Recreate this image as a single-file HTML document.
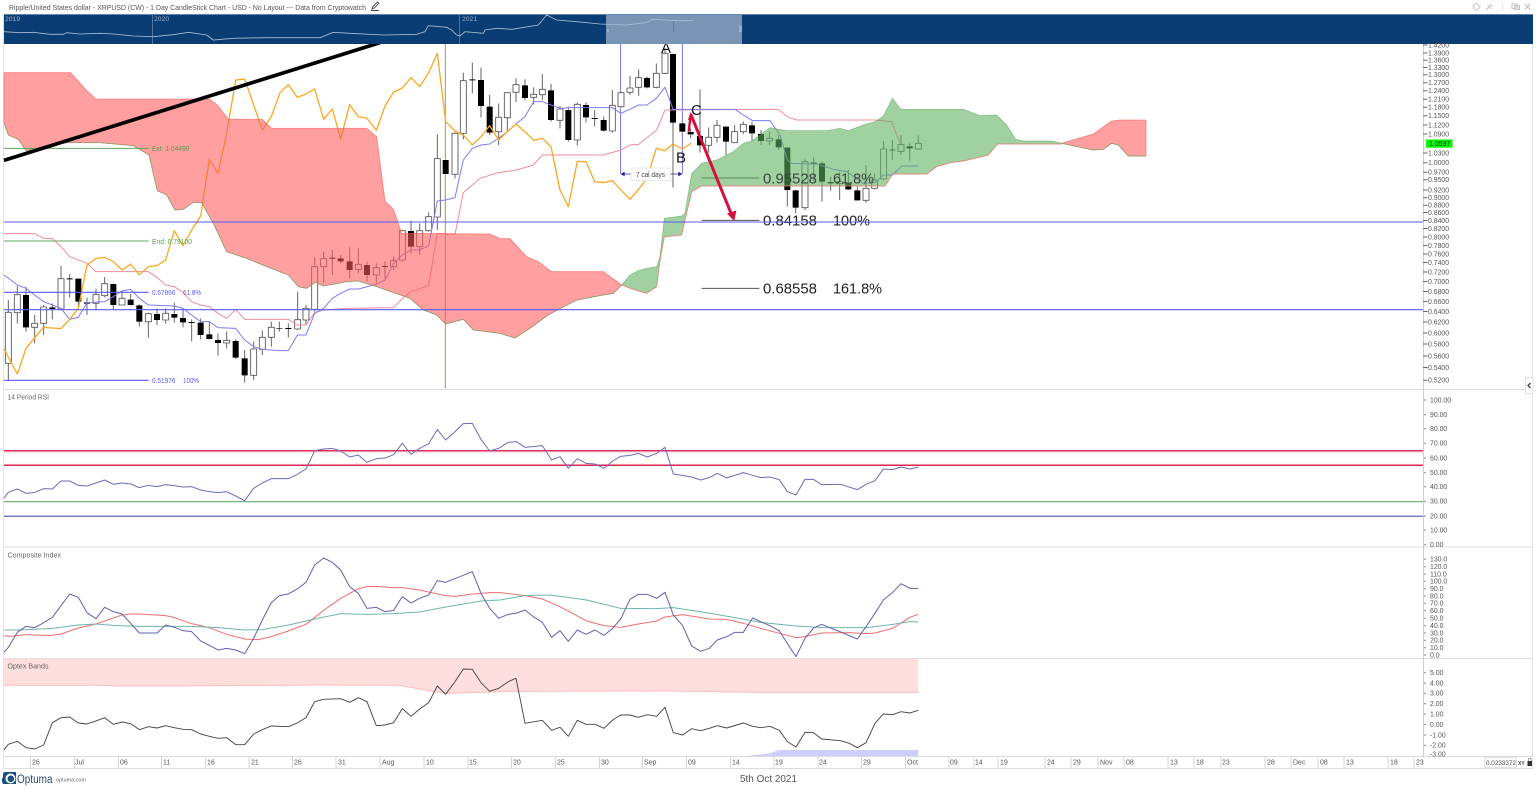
<!DOCTYPE html>
<html><head><meta charset="utf-8"><title>XRPUSD</title>
<style>
html,body{margin:0;padding:0;background:#fff;width:1536px;height:788px;overflow:hidden}
svg{display:block;position:absolute;left:0;top:0;filter:blur(.35px)}
text{font-family:"Liberation Sans",sans-serif}
.ax text{font-size:6.9px;fill:#555}
.dt text{font-size:7px;fill:#555}
.lb{font-size:7.2px;fill:#666}
.big{font-size:15px;fill:#222}
</style></head><body>
<svg width="1536" height="788" viewBox="0 0 1536 788">
<!-- frame -->
<path d="M3.5 14V769M1532.5 44V769" stroke="#e2e2e2" fill="none"/>
<path d="M4 389.5H1533M4 547H1533M4 658.5H1533M4 756.5H1533M4 768.5H1533" stroke="#dcdcdc" fill="none"/>
<path d="M1423.5 44V757" stroke="#cfcfcf" fill="none"/>

<g transform="scale(.33333)" fill="none" stroke-linejoin="round">
<!-- vertical marker -->
<path d="M1336 130V1165" stroke="#a09a50" stroke-width="3"/>
<!-- big fib labels lines -->
<path d="M2105 534H2278M2105 661H2278M2105 865H2278" stroke="#555" stroke-width="3"/>
<!-- measure -->
<path d="M1862 130V522M2047 130V522" stroke="#5d5de0" stroke-width="2.5"/>
<path d="M1866 522H2044" stroke="#22229a" stroke-width="2.5"/>
<path d="M1862 522l12-7v14zM2047 522l-12-7v14z" fill="#22229a"/>

<!-- candle wicks -->
<path stroke="#666" stroke-width="3" d="M25 900V1140M52 858V970M78 860V995M104 945V1030M131 915V1005M157 910V958M183 798V930M209 822V893M235 836V920M261 893V945M288 866V928M314 831V892M340 850V928M366 873V915M392 882V916M418 914V980M445 938V1013M471 925V975M497 925V970M523 908V968M549 927V982M575 958V1024M602 955V1018M628 963V1018M654 1000V1067M680 995V1045M707 1018V1077M734 1050V1148M761 1025V1140M787 992V1065M814 965V1040M838 965V995M865 970V1012M893 875V990M918 915V975M944 772V935M971 755V848M997 750V825M1022 765V790M1049 742V835M1075 745V820M1101 785V845M1129 790V850M1155 785V835M1181 770V810M1207 690V785M1233 662V760M1259 670V765M1286 637V695M1312 403V690M1337 480V522M1365 397V535M1390 218V418M1417 188V280M1443 203V352M1469 285V405M1496 310V435M1522 278V395M1548 235V306M1575 238V302M1601 262V313M1627 222V300M1653 252V365M1680 318V385M1705 320V425M1732 308V437M1758 307V368M1784 330V380M1811 350V395M1837 270V398M1863 275V320M1890 228V285M1916 208V288M1941 230V265M1969 190V265M1995 145V222M2019 160V563M2047 368V395M2072 385V415M2100 268V458M2126 382V458M2151 360V428M2178 378V465M2204 375V428M2230 365V402M2256 365V422M2283 390V435M2309 395V435M2336 405V450M2362 442V620M2387 570V640M2415 478V630M2441 472V545M2466 485V605M2492 530V572M2519 515V600M2545 510V570M2572 560V602M2598 495V608M2624 520V568M2651 423V540M2677 420V480M2703 405V465M2729 430V482M2755 406V450"/>
<!-- white bodies -->
<path fill="#fff" stroke="#555" stroke-width="2.6" d="M16 937h18v153h-18zM43 884h18v54h-18zM95 970h18v12h-18zM122 921h18v49h-18zM174 836h18v91h-18zM279 883h18v27h-18zM305 851h18v36h-18zM357 895h18v20h-18zM436 941h18v24h-18zM488 940h18v20h-18zM671 1021h18v8h-18zM752 1047h18v79h-18zM778 1012h18v36h-18zM805 982h18v30h-18zM884 959h18v28h-18zM909 925h18v35h-18zM935 800h18v128h-18zM962 776h18v24h-18zM1066 793h18v15h-18zM1120 803h18v22h-18zM1172 782h18v18h-18zM1198 692h18v88h-18zM1250 692h18v48h-18zM1277 650h18v42h-18zM1303 476h18v175h-18zM1356 400h18v123h-18zM1381 242h18v158h-18zM1487 352h18v43h-18zM1513 278h18v75h-18zM1539 254h18v23h-18zM1592 283h18v9h-18zM1618 268h18v16h-18zM1671 327h18v34h-18zM1723 313h18v107h-18zM1828 316h18v77h-18zM1854 278h18v42h-18zM1881 264h18v13h-18zM1907 233h18v29h-18zM1960 220h18v42h-18zM1986 160h18v60h-18zM2117 412h18v24h-18zM2142 376h18v36h-18zM2195 395h18v33h-18zM2221 373h18v22h-18zM2300 415h18v8h-18zM2406 485h18v138h-18zM2510 545h18v6h-18zM2589 565h18v36h-18zM2615 540h18v25h-18zM2642 447h18v90h-18zM2694 434h18v20h-18zM2746 430h18v17h-18z"/>
<!-- black bodies -->
<path stroke="#000" stroke-width="18" d="M78 885V982M157 922V927M209 835V838M235 836V905M261 907V911M340 852V915M392 899V915M418 916V965M471 942V960M523 942V953M549 954V967M575 966V969M602 968V1005M628 1003V1017M654 1020V1029M707 1023V1073M734 1075V1126M838 984V986M865 984V987M997 773V776M1022 775V784M1049 784V810M1101 795V825M1155 798V801M1233 693V740M1337 480V522M1417 238V241M1443 240V318M1469 320V398M1575 256V294M1653 271V360M1705 330V420M1758 315V352M1784 354V357M1811 360V392M1941 234V262M2019 162V368M2047 370V395M2072 396V403M2100 408V436M2178 380V425M2256 376V400M2283 402V423M2336 418V442M2362 443V570M2387 571V623M2441 488V491M2466 490V545M2492 546V550M2545 548V568M2572 571V601M2677 449V451M2729 439V445"/>

<!-- Kijun pink -->
<polyline stroke="#f08c9c" stroke-width="3" points="12,701 104,701 131,715 157,716 183,740 209,770 261,790 288,815 445,815 471,832 497,855 523,860 549,877 575,905 602,915 628,920 654,940 680,955 707,928 734,958 865,958 892,975 918,975 944,938 971,930 1040,925 1180,923 1208,895 1233,875 1286,857 1312,700 1365,703 1390,578 1440,535 1495,518 1550,510 1600,495 1627,465 1810,465 1863,450 1890,435 1916,433 1970,390 1995,330 2335,328 2365,352 2390,360 2625,360 2675,365 2700,430"/>
<!-- Tenkan blue -->
<polyline stroke="#7c7cf0" stroke-width="3" points="12,825 52,855 78,865 104,885 131,905 157,915 183,925 209,958 235,952 261,908 314,905 340,890 366,873 392,868 418,895 445,915 523,918 549,925 575,945 602,965 628,965 654,983 707,985 734,1020 761,1040 787,1048 838,1052 865,1052 892,1005 918,1005 944,940 971,925 997,895 1022,880 1049,867 1075,867 1129,853 1155,840 1181,790 1207,765 1233,750 1259,750 1286,737 1312,603 1337,600 1365,593 1390,480 1417,445 1443,435 1469,432 1496,415 1522,395 1548,372 1575,350 1601,305 1627,305 1653,315 1680,325 1705,323 1837,323 1863,340 1890,328 1916,315 1941,315 1969,295 1995,262 2019,328 2205,328 2230,345 2258,362 2310,362 2340,405 2362,480 2375,490 2450,492 2500,508 2540,515 2590,550 2625,548 2650,525 2678,525 2705,498 2755,498"/>
<!-- Chikou orange -->
<polyline stroke="#f9a61e" stroke-width="3.8" points="12,1047 52,1122 78,1045 130,982 183,986 209,958 235,925 261,795 288,775 314,772 340,785 366,810 392,792 418,824 445,800 471,797 497,780 523,692 549,737 575,690 602,648 628,478 654,520 680,400 707,240 734,237 787,390 814,350 840,278 865,254 892,292 918,282 944,267 971,358 997,327 1022,417 1049,314 1075,350 1101,355 1129,391 1155,318 1181,276 1207,264 1233,233 1259,260 1286,218 1312,160 1337,365 1365,393 1390,405 1417,435 1443,410 1469,377 1496,420 1522,395 1548,372 1575,395 1601,421 1627,415 1653,440 1680,570 1705,620 1732,484 1758,485 1784,545 1811,548 1837,542 1863,570 1890,598 1916,568 1941,535 1969,445 1995,452 2019,432 2047,447 2073,430"/>

<!-- Red cloud -->
<polygon fill="#ff5a5a" fill-opacity=".58" stroke="#f05050" stroke-opacity=".6" stroke-width="2.5" points="12,218 212,218 260,272 288,297 628,297 655,318 685,358 787,358 815,385 1100,385 1130,410 1155,603 1180,628 1205,700 1470,702 1500,716 1530,716 1580,770 1615,785 1655,815 1810,815 1865,855 1840,880 1810,885 1730,900 1644,945 1590,985 1545,1014 1500,1000 1420,990 1390,958 1337,972 1310,945 1270,930 1230,895 1130,860 1075,843 1040,845 970,858 945,847 920,865 895,860 865,825 800,800 740,775 680,755 640,670 605,608 580,607 550,628 525,630 500,585 472,572 447,465 400,437 300,428 200,428 130,440 78,452 55,418 25,405 12,368"/>
<polyline stroke="#7aa36c" stroke-width="2" points="12,368 25,405 55,418 78,452 130,440 200,428 300,428 400,437 447,465 472,572 500,585 525,630 550,628 580,607 605,608 640,670 680,755 740,775 800,800 865,825 895,860 920,865 945,847 970,858 1040,845 1075,843 1130,860 1230,895 1270,930 1310,945 1337,972 1390,958 1420,990 1500,1000 1545,1014 1590,985 1644,945 1730,900 1810,885 1840,880 1865,855"/>
<!-- Green cloud -->
<polygon fill="#5fb05f" fill-opacity=".59" stroke="#3d9a3d" stroke-opacity=".55" stroke-width="2" points="1865,855 1890,825 1915,812 1940,805 1970,800 1980,770 1993,655 2045,648 2055,640 2075,520 2105,490 2150,480 2200,455 2230,430 2255,423 2310,383 2360,392 2480,392 2520,385 2545,392 2590,375 2625,365 2650,348 2677,295 2703,328 2890,328 2940,347 2990,345 3020,375 3047,418 3070,423 3155,423 3185,430 3185,432 2992,432 2965,465 2890,483 2850,488 2810,500 2780,522 2678,522 2655,558 2105,558 2075,575 2055,660 2045,705 1993,710 1980,780 1970,860 1940,880 1900,868"/>
<polyline stroke="#f08080" stroke-width="2.5" points="1865,855 1900,868 1940,880 1970,860 1980,780 1993,710 2045,705 2055,660 2075,575 2105,558 2655,558 2678,522 2780,522 2810,500 2850,488 2890,483 2965,465 2992,432 3185,432"/>
<!-- Red cloud end -->
<polygon fill="#ff5a5a" fill-opacity=".58" stroke="#f05050" stroke-opacity=".6" stroke-width="2.5" points="3185,430 3280,402 3335,363 3360,360 3438,360 3438,468 3385,468 3355,435 3335,430 3310,448 3280,450"/>
<polyline stroke="#7aa36c" stroke-width="2" points="3185,430 3280,450 3310,448 3335,430 3355,435 3385,468 3438,468"/>

<!-- big labels -->
<g transform="scale(3)" stroke="none">
<text class="big" x="763" y="183.5" style="fill:#3a4440" textLength="54" lengthAdjust="spacingAndGlyphs">0.95528</text><text class="big" x="833" y="183.5" style="fill:#3a4440" textLength="41" lengthAdjust="spacingAndGlyphs">61.8%</text>
<text class="big" x="763" y="225.5" textLength="54" lengthAdjust="spacingAndGlyphs">0.84158</text><text class="big" x="833" y="225.5" textLength="37" lengthAdjust="spacingAndGlyphs">100%</text>
<text class="big" x="763" y="293.5" textLength="54" lengthAdjust="spacingAndGlyphs">0.68558</text><text class="big" x="833" y="293.5" textLength="49" lengthAdjust="spacingAndGlyphs">161.8%</text>
</g>

<!-- horizontal -->
<path d="M12 666H4269M12 929H4269" stroke="#5a5af0" stroke-width="3.2"/>
<path d="M12 445H446M12 723H446" stroke="#5da85d" stroke-width="3"/>
<path d="M12 877H446M12 1141H446" stroke="#5a5af0" stroke-width="3.2"/>
<!-- trend line -->
<path d="M12 481L1140 128" stroke="#000" stroke-width="11"/>
<!-- red arrows -->
<path d="M2066 395L2072 345" stroke="#d5103f" stroke-width="7"/>
<path d="M2072 342L2198 652" stroke="#d5103f" stroke-width="9"/>
<path d="M2072 336l-8 24 17-2zM2203 663l-22-22 28-10z" fill="#d5103f"/>

<!-- RSI lines -->
<g transform="translate(0,1155)">
<path d="M12 200.5H4269M12 238H4269" stroke="#f5b4c0" stroke-width="3"/>
<path d="M12 197H4269M12 241H4269" stroke="#d8073f" stroke-width="3.4"/>
<path d="M12 350H4269" stroke="#64ac64" stroke-width="3.2"/>
<path d="M12 391.5H4269" stroke="#d6d6f4" stroke-width="2"/>
<path d="M12 394H4269" stroke="#6666b8" stroke-width="3.2"/>
<polyline stroke="#6c6cb8" stroke-width="3" points="12,340 25,322 52,312 78,325 104,322 131,311 157,312 183,288 209,288 235,301 261,303 288,294 314,285 340,298 366,294 392,297 418,308 445,301 471,305 497,299 523,302 549,306 575,305 602,315 628,320 654,323 680,320 707,333 734,347 761,310 787,294 814,281 865,281 892,268 918,252 944,197 971,192 997,190 1022,198 1049,216 1075,210 1101,232 1129,221 1155,219 1181,209 1207,175 1233,208 1259,190 1286,176 1312,134 1337,165 1365,140 1390,116 1417,115 1443,163 1469,198 1496,190 1525,172 1550,170 1575,187 1627,182 1655,225 1680,215 1705,250 1732,221 1758,235 1785,237 1812,250 1838,228 1862,214 1890,211 1915,205 1942,216 1970,205 1995,187 2020,267 2050,272 2075,276 2102,285 2128,278 2152,265 2180,279 2230,263 2258,271 2282,278 2310,276 2338,284 2362,320 2388,330 2415,283 2440,283 2465,299 2522,298 2572,314 2598,298 2625,287 2650,252 2678,254 2703,246 2730,252 2755,246"/>

<!-- Composite -->
<polyline stroke="#ee6e6e" stroke-width="3" points="12,752 30,754 78,749 130,751 157,751 183,747 235,729 288,717 314,708 366,690 392,687 418,687 497,692 523,698 575,716 628,728 680,748 734,762 775,764 814,755 865,738 918,718 971,676 1022,640 1075,611 1101,605 1129,604 1181,608 1207,608 1259,615 1312,627 1337,632 1365,634 1417,627 1470,623 1500,623 1575,632 1627,642 1680,665 1760,708 1812,722 1862,727 1915,717 1970,708 1995,696 2048,689 2128,702 2180,703 2230,715 2282,730 2338,745 2388,758 2415,755 2465,744 2548,743 2598,746 2625,744 2678,730 2730,697 2755,688"/>
<polyline stroke="#6fb5ac" stroke-width="3" points="12,735 60,735 157,730 235,720 288,717 340,721 418,724 497,724 575,724 654,728 734,735 787,734 865,720 944,702 1022,686 1100,688 1180,686 1259,681 1337,666 1443,648 1500,645 1575,632 1650,630 1760,645 1862,670 1970,671 2020,668 2100,680 2205,698 2282,712 2388,723 2465,728 2600,728 2678,718 2730,710 2755,711"/>
<polyline stroke="#6060b0" stroke-width="3" points="12,802 25,787 52,742 78,724 104,728 131,713 157,697 183,662 209,627 235,637 261,683 288,701 314,667 340,680 366,687 392,715 418,744 471,744 497,720 523,727 549,737 575,740 602,768 654,795 680,790 707,795 734,806 761,760 787,705 814,653 838,632 865,627 892,612 918,592 944,540 971,519 997,532 1022,555 1049,605 1075,625 1101,670 1129,667 1155,680 1181,676 1207,635 1233,654 1259,640 1286,630 1312,587 1337,592 1417,560 1443,625 1469,670 1496,700 1525,688 1550,684 1575,675 1600,695 1627,712 1655,757 1680,737 1705,769 1732,735 1758,748 1785,735 1812,751 1838,730 1862,702 1890,643 1915,628 1942,628 1970,640 1995,622 2020,690 2048,722 2075,783 2102,799 2128,790 2152,765 2180,755 2205,742 2230,742 2258,699 2282,710 2310,722 2338,738 2388,815 2415,760 2440,730 2465,718 2522,741 2572,762 2598,725 2625,685 2650,645 2678,622 2703,596 2730,610 2755,610"/>

<!-- Optex -->
<polygon fill="#ffdede" points="12,821 2755,821 2755,922 2280,922 2000,918 1536,919 1340,925 1290,918 1200,901 950,900 850,901 500,903 350,903 300,901 12,901"/>
<polyline stroke="#ffbcbc" stroke-width="3" points="12,901 300,901 350,903 500,903 850,901 950,900 1200,901 1290,918 1340,925 1536,919 2000,918 2280,922 2755,922"/>
<polygon fill="#cfcfff" points="2238,1113 2280,1108 2310,1105 2335,1095 2755,1095 2755,1113"/>
<polyline stroke="#444" stroke-width="2.8" points="12,1094 25,1078 52,1069 78,1088 104,1092 131,1080 157,1013 183,998 209,996 235,1014 261,1017 288,1008 314,998 340,1018 366,1011 392,1016 418,1034 445,1025 471,1029 497,1022 523,1028 549,1033 575,1034 602,1047 628,1054 654,1060 680,1058 707,1079 734,1079 761,1047 787,1034 814,1023 865,1025 892,1014 918,998 944,950 971,943 1022,941 1049,952 1075,938 1101,950 1129,1022 1155,1020 1181,1013 1207,971 1233,994 1259,972 1286,953 1312,903 1337,928 1365,890 1390,852 1417,853 1443,893 1469,919 1496,910 1525,890 1548,880 1575,1015 1627,1006 1655,1036 1680,1027 1705,1054 1732,1006 1758,1018 1785,1018 1812,1030 1838,1005 1862,990 1890,990 1915,997 1942,989 1970,994 1995,967 2020,1043 2048,1050 2075,1031 2102,1037 2128,1030 2152,1022 2180,1029 2230,1014 2258,1024 2282,1028 2310,1024 2338,1036 2362,1070 2388,1086 2415,1042 2440,1043 2465,1062 2522,1067 2548,1075 2572,1088 2598,1073 2625,1015 2650,987 2678,989 2703,980 2730,984 2755,976"/>
</g>
</g>

<!-- 7 cal days -->
<rect x="631" y="168" width="39" height="12.5" fill="#fff" stroke="#e8e8e8"/>
<text x="636" y="177" font-size="7" fill="#444" textLength="29" lengthAdjust="spacingAndGlyphs">7 cal days</text>
<!-- ABC -->
<text x="661" y="53" font-size="15" fill="#111">A</text>
<text x="676" y="162.5" font-size="15" fill="#111">B</text>
<text x="691" y="115" font-size="15" fill="#111">C</text>
<!-- fib labels -->
<text x="152" y="151" font-size="7" fill="#4f9e4f" textLength="37.5" lengthAdjust="spacingAndGlyphs">Ext: 1.04490</text>
<text x="152" y="244" font-size="7" fill="#4f9e4f" textLength="40" lengthAdjust="spacingAndGlyphs">End: 0.79100</text>
<text x="152" y="295" font-size="7" fill="#5a5af0" textLength="23.500" lengthAdjust="spacingAndGlyphs">0.67866</text>
<text x="183" y="295" font-size="7" fill="#5a5af0" textLength="18" lengthAdjust="spacingAndGlyphs">61.8%</text>
<text x="152" y="383" font-size="7" fill="#5a5af0" textLength="23.500" lengthAdjust="spacingAndGlyphs">0.51976</text>
<text x="183" y="383" font-size="7" fill="#5a5af0" textLength="16" lengthAdjust="spacingAndGlyphs">100%</text>
<!-- pane labels -->
<text class="lb" x="7.5" y="399.5" textLength="41.5" lengthAdjust="spacingAndGlyphs">14 Period RSI</text>
<text class="lb" x="7.5" y="557.5" textLength="53.5" lengthAdjust="spacingAndGlyphs">Composite Index</text>
<text class="lb" x="7.5" y="668.5" textLength="41" lengthAdjust="spacingAndGlyphs">Optex Bands</text>

<!-- overview -->
<rect x="4" y="14" width="1529" height="30" fill="#0a3d73"/>
<rect x="4" y="14" width="1529" height="1" fill="#5f86ac"/>
<rect x="606" y="15" width="136" height="29" fill="#7896b4"/>
<path d="M152.5 15V44M459.5 15V44" stroke="#4e76a0" fill="none"/>
<path d="M607 29h2v3h-2zM739 26h3v6h-3z" fill="#9ab0c6"/>
<path d="M673.5 20V32" stroke="#5f7f9f" fill="none"/>
<g transform="scale(.33333)"><polyline fill="none" stroke="#a9bfd4" stroke-width="2.6" points="12,95 60,98 100,97 150,103 190,103 200,98 240,102 300,100 340,102 400,108 460,110 520,104 565,97 620,105 640,120 700,115 800,113 900,113 960,113 1000,97 1050,100 1150,105 1250,103 1275,95 1285,77 1340,82 1355,90 1370,105 1380,108 1395,95 1450,100 1455,90 1490,85 1536,88 1615,75 1640,45 1670,60 1730,65 1800,72 1880,75 1935,68 1960,58 2030,62 2080,62"/></g>
<g font-size="6.8" fill="#9db4cc"><text x="5" y="21">2019</text><text x="154" y="21">2020</text><text x="462" y="21">2021</text></g>

<!-- title -->
<text x="9" y="10" font-size="7.2" fill="#555" textLength="357" lengthAdjust="spacingAndGlyphs">Ripple/United States dollar - XRPUSD (CW) - 1 Day CandleStick Chart - USD - No Layout --- Data from Cryptowatch</text>
<path d="M372 9l1-2.5 4.5-4.5 1.4 1.4-4.5 4.5zM371 10.5h8" fill="none" stroke="#444" stroke-width=".9"/>
<!-- top right icons -->
<g fill="none" stroke="#c8c8c8">
<path d="M1476.5 3l3.7 3.7-3.7 3.7-3.7-3.7z"/>
<path d="M1486 10l3-3m-1.5-2l4 4m-2-5l3 3" stroke-width="1.2"/>
<path d="M1502.5 4v1M1502.5 6.500v1M1502.5 9v1" />
<rect x="1512" y="4" width="5.500" height="4.500" stroke-width="1.200"/><rect x="1514.500" y="5.500" width="5" height="4" fill="#ddd"/>
<path d="M1525 4l5 5.500M1530 4l-5 5.500" stroke-width="1.400"/>
</g>

<!-- price axis -->
<path fill="none" stroke="#666" d="M1423 45h4.500M1423 53h4.500M1423 60.300h4.500M1423 67.500h4.500M1423 74.700h4.500M1423 82.700h4.500M1423 90.700h4.500M1423 99.300h4.500M1423 107.300h4.500M1423 115.700h4.500M1423 125h4.500M1423 134h4.500M1423 153h4.500M1423 162.700h4.500M1423 172.300h4.500M1423 179.700h4.500M1423 190h4.500M1423 197.700h4.500M1423 205.300h4.500M1423 212.500h4.500M1423 220.500h4.500M1423 228.500h4.500M1423 237h4.500M1423 245.500h4.500M1423 254h4.500M1423 262.500h4.500M1423 272h4.500M1423 281.500h4.500M1423 291.500h4.500M1423 301.500h4.500M1423 311.500h4.500M1423 322h4.500M1423 333h4.500M1423 344h4.500M1423 356h4.500M1423 367.500h4.500M1423 380.300h4.500"/>
<g class="ax">
<text x="1428" y="47.400">1.4200</text><text x="1428" y="55.400">1.3900</text><text x="1428" y="62.700">1.3600</text><text x="1428" y="69.900">1.3300</text><text x="1428" y="77.100">1.3000</text><text x="1428" y="85.100">1.2700</text><text x="1428" y="93.100">1.2400</text><text x="1428" y="101.700">1.2100</text><text x="1428" y="109.700">1.1800</text><text x="1428" y="118.100">1.1500</text><text x="1428" y="127.400">1.1200</text><text x="1428" y="136.400">1.0900</text><text x="1428" y="155.400">1.0300</text><text x="1428" y="165.100">1.0000</text><text x="1428" y="174.700">0.9700</text><text x="1428" y="182.100">0.9500</text><text x="1428" y="192.400">0.9200</text><text x="1428" y="200.100">0.9000</text><text x="1428" y="207.700">0.8800</text><text x="1428" y="214.900">0.8600</text><text x="1428" y="222.900">0.8400</text><text x="1428" y="230.900">0.8200</text><text x="1428" y="239.400">0.8000</text><text x="1428" y="247.900">0.7800</text><text x="1428" y="256.400">0.7600</text><text x="1428" y="264.900">0.7400</text><text x="1428" y="274.400">0.7200</text><text x="1428" y="283.900">0.7000</text><text x="1428" y="293.900">0.6800</text><text x="1428" y="303.900">0.6600</text><text x="1428" y="313.900">0.6400</text><text x="1428" y="324.400">0.6200</text><text x="1428" y="335.400">0.6000</text><text x="1428" y="346.400">0.5800</text><text x="1428" y="358.400">0.5600</text><text x="1428" y="369.900">0.5400</text><text x="1428" y="382.700">0.5200</text>
<!-- RSI -->
<text x="1430" y="402.400">100.00</text><text x="1430" y="417.100">90.00</text><text x="1430" y="431.100">80.00</text><text x="1430" y="445.700">70.00</text><text x="1430" y="460.400">60.00</text><text x="1430" y="475.100">50.00</text><text x="1430" y="489.100">40.00</text><text x="1430" y="503.700">30.00</text><text x="1430" y="518.400">20.00</text><text x="1430" y="532.400">10.00</text><text x="1430" y="547">0.00</text>
<!-- Composite -->
<text x="1430" y="561.700">130.0</text><text x="1430" y="569.100">120.0</text><text x="1430" y="576.400">110.0</text><text x="1430" y="583.700">100.0</text><text x="1430" y="591.100">90.0</text><text x="1430" y="598.400">80.0</text><text x="1430" y="605.700">70.0</text><text x="1430" y="613.100">60.0</text><text x="1430" y="620.700">50.0</text><text x="1430" y="628.100">40.0</text><text x="1430" y="635.400">30.0</text><text x="1430" y="642.700">20.0</text><text x="1430" y="650.100">10.0</text><text x="1430" y="657.400">0.0</text>
<!-- Optex -->
<text x="1430" y="675.100">5.00</text><text x="1430" y="685.400">4.00</text><text x="1430" y="695.700">3.00</text><text x="1430" y="706.100">2.00</text><text x="1430" y="716.400">1.00</text><text x="1430" y="726.900">0.00</text><text x="1430" y="737.400">-1.00</text><text x="1430" y="747.700">-2.00</text><text x="1430" y="756.500">-3.00</text>
</g>
<path fill="none" stroke="#888" d="M1424 400h2M1424 414.700h2M1424 428.700h2M1424 443.300h2M1424 458h2M1424 472.700h2M1424 486.700h2M1424 501.300h2M1424 516h2M1424 530h2M1424 544.700h2M1424 559.300h2M1424 566.700h2M1424 574h2M1424 581.300h2M1424 588.700h2M1424 596h2M1424 603.300h2M1424 610.700h2M1424 618.300h2M1424 625.700h2M1424 633h2M1424 640.300h2M1424 647.700h2M1424 655h2M1424 672.700h2M1424 683h2M1424 693.300h2M1424 703.700h2M1424 714h2M1424 724.500h2M1424 735h2M1424 745.300h2"/>
<rect x="1426" y="139.500" width="26.500" height="8.200" fill="#00ff00"/>
<text x="1429" y="146" font-size="7" fill="#111">1.0597</text>

<!-- collapse button -->
<rect x="1525.500" y="377.500" width="7.500" height="16" rx="1" fill="#fff" stroke="#ddd"/>
<path d="M1530.500 383l-2.500 2.500 2.500 2.500" fill="none" stroke="#444" stroke-width="1.300"/>

<!-- date axis -->
<path fill="none" stroke="#d4d4d4" d="M30.500 757V768M74.500 757V768M118.500 757V768M161.500 757V768M205.500 757V768M249 757V768M292.500 757V768M336 757V768M380 757V768M424 757V768M468 757V768M511.500 757V768M555.500 757V768M599.500 757V768M642.500 757V768M686.500 757V768M730.500 757V768M774 757V768M818 757V768M861.500 757V768M905.500 757V768M949 757V768M974 757V768M998 757V768M1045 757V768M1071 757V768M1098 757V768M1124 757V768M1168 757V768M1194 757V768M1221 757V768M1265 757V768M1291 757V768M1318 757V768M1344 757V768M1388 757V768M1414 757V768"/>
<g class="dt">
<text x="32" y="764.500">26</text><text x="75" y="764.500">Jul</text><text x="120" y="764.500">06</text><text x="163" y="764.500">11</text><text x="207" y="764.500">16</text><text x="251" y="764.500">21</text><text x="294" y="764.500">26</text><text x="338" y="764.500">31</text><text x="382" y="764.500">Aug</text><text x="426" y="764.500">10</text><text x="469" y="764.500">15</text><text x="513" y="764.500">20</text><text x="557" y="764.500">25</text><text x="601" y="764.500">30</text><text x="644" y="764.500">Sep</text><text x="688" y="764.500">09</text><text x="732" y="764.500">14</text><text x="775" y="764.500">19</text><text x="819" y="764.500">24</text><text x="863" y="764.500">29</text><text x="907" y="764.500">Oct</text><text x="950" y="764.500">09</text><text x="975" y="764.500">14</text><text x="1000" y="764.500">19</text><text x="1047" y="764.500">24</text><text x="1073" y="764.500">29</text><text x="1100" y="764.500">Nov</text><text x="1126" y="764.500">08</text><text x="1170" y="764.500">13</text><text x="1196" y="764.500">18</text><text x="1222" y="764.500">23</text><text x="1267" y="764.500">28</text><text x="1293" y="764.500">Dec</text><text x="1320" y="764.500">08</text><text x="1346" y="764.500">13</text><text x="1390" y="764.500">18</text><text x="1416" y="764.500">23</text>
</g>
<rect x="1484.500" y="757.500" width="32" height="10" fill="#fafafa" stroke="#e4e4e4"/>
<text x="1486" y="765.200" font-size="6.800" fill="#555" textLength="30" lengthAdjust="spacingAndGlyphs">0.0233372</text>
<text x="1518" y="765" font-size="5" font-weight="bold" fill="#444">XY</text>
<rect x="1527.500" y="761" width="4.500" height="5" fill="#333"/>
<path d="M1528.500 761v-1.500a1.300 1.300 0 0 1 2.600 0V761" fill="none" stroke="#777" stroke-width=".7"/>

<!-- footer -->
<path d="M5.500 772H16V784H3V774.500a2.500 2.500 0 0 1 2.500-2.500z" fill="#1c4f82"/>
<path d="M3 784a7.500 7 0 0 1 7.500-10.500A6.500 5.500 0 0 1 16 776V772H5.500A2.500 2.500 0 0 0 3 774.500z" fill="#1c4f82"/>
<circle cx="10.500" cy="778.500" r="5" fill="#fff"/>
<circle cx="10.800" cy="778.800" r="3.300" fill="#1c4f82"/>
<text x="17" y="783" font-size="11.500" fill="#1f4a75" textLength="35.500" lengthAdjust="spacingAndGlyphs">Optuma</text>
<text x="56" y="781.500" font-size="5.800" fill="#666" textLength="30" lengthAdjust="spacingAndGlyphs">optuma.com</text>
<text x="740" y="782" font-size="10.400" fill="#555" textLength="57" lengthAdjust="spacingAndGlyphs">5th Oct 2021</text>
</svg>
</body></html>
